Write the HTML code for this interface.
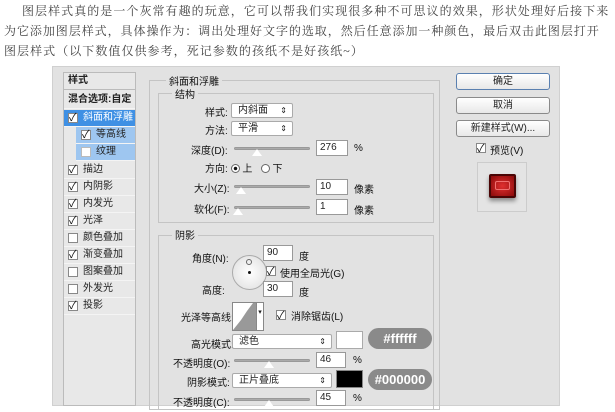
<!DOCTYPE html>
<html><head><meta charset="utf-8"><style>
*{margin:0;padding:0;box-sizing:border-box}
body{width:615px;height:412px;background:#fff;position:relative;overflow:hidden;font-family:"Liberation Sans","Noto Sans CJK SC",sans-serif;color:#222}
.a{position:absolute;white-space:nowrap}
.p{font-family:"Liberation Serif","Noto Serif CJK SC",serif;font-size:12px;color:#444;letter-spacing:1.05px}
.dlg{position:absolute;left:52px;top:66px;width:508px;height:340px;background:#e2e2e2;border:1px solid #d0d0d0}
.f{font-size:10px;color:#111}
.list{position:absolute;left:63px;top:72px;width:73px;height:334px;background:#e8e8e8;border:1px solid #bbb}
.it{position:absolute;left:0;width:71px;height:17px;border-bottom:1px solid #f4f4f4;font-size:10px;line-height:16px}
.cb{position:absolute;width:10px;height:10px;background:#fff;border:1px solid #888;top:3px}
.cb.c::after{content:"✓";position:absolute;left:0;top:-4px;font-size:11px;color:#111}
.box{position:absolute;border:1px solid #c4c4c4}
.sel{position:absolute;height:15px;background:#fff;border:1px solid #aaa;border-radius:2px;font-size:10px;line-height:13px;padding-left:6px}
.sel::after{content:"⇕";position:absolute;right:5px;top:0;font-size:8px}
.in{position:absolute;height:16px;background:#fff;border:1px solid #999;font-size:10px;line-height:14px;padding-left:3px}
.sl{position:absolute;height:3px;background:#aaa;border:1px solid #999;border-radius:2px}
.th{position:absolute;width:0;height:0;border-left:5px solid transparent;border-right:5px solid transparent;border-bottom:7px solid #fff;top:2px}
.btn{position:absolute;left:456px;width:94px;height:17px;background:linear-gradient(#fff,#e8e8e8);border:1px solid #8a8a8a;border-radius:3px;font-size:10px;text-align:center;line-height:15px}
.tag{position:absolute;left:368px;width:64px;height:21px;border-radius:11px;background:#8a8a8a;color:#fff;font-weight:bold;font-size:13px;text-align:center;line-height:21px}
</style></head><body>
<div class="a p" style="left:22px;top:2px">图层样式真的是一个灰常有趣的玩意，它可以帮我们实现很多种不可思议的效果，形状处理好后接下来</div>
<div class="a p" style="left:4px;top:22px;letter-spacing:0.95px">为它添加图层样式，具体操作为：调出处理好文字的选取，然后任意添加一种颜色，最后双击此图层打开</div>
<div class="a p" style="left:4px;top:42px">图层样式（以下数值仅供参考，死记参数的孩纸不是好孩纸~）</div>
<div class="dlg"></div>
<div class="list">
<div class="it" style="top:0;font-weight:bold;padding-left:4px;border-bottom:1px solid #bbb">样式</div>
<div class="it" style="top:19px;padding-left:4px;font-weight:bold">混合选项:自定</div>
<div class="it" style="top:37px;background:#3f90e4;color:#fff"><span class="cb c" style="left:4px"></span><span style="position:absolute;left:19px">斜面和浮雕</span></div>
<div class="it" style="top:54px;background:#9ec6f0;left:12px;width:59px"><span class="cb c" style="left:5px"></span><span style="position:absolute;left:20px">等高线</span></div>
<div class="it" style="top:71px;background:#9ec6f0;left:12px;width:59px"><span class="cb" style="left:5px;border-color:#bbb"></span><span style="position:absolute;left:20px">纹理</span></div>
<div class="it" style="top:89px"><span class="cb c" style="left:4px"></span><span style="position:absolute;left:19px">描边</span></div>
<div class="it" style="top:106px"><span class="cb c" style="left:4px"></span><span style="position:absolute;left:19px">内阴影</span></div>
<div class="it" style="top:123px"><span class="cb c" style="left:4px"></span><span style="position:absolute;left:19px">内发光</span></div>
<div class="it" style="top:140px"><span class="cb c" style="left:4px"></span><span style="position:absolute;left:19px">光泽</span></div>
<div class="it" style="top:157px"><span class="cb" style="left:4px"></span><span style="position:absolute;left:19px">颜色叠加</span></div>
<div class="it" style="top:174px"><span class="cb c" style="left:4px"></span><span style="position:absolute;left:19px">渐变叠加</span></div>
<div class="it" style="top:191px"><span class="cb" style="left:4px"></span><span style="position:absolute;left:19px">图案叠加</span></div>
<div class="it" style="top:208px"><span class="cb" style="left:4px"></span><span style="position:absolute;left:19px">外发光</span></div>
<div class="it" style="top:225px"><span class="cb c" style="left:4px"></span><span style="position:absolute;left:19px">投影</span></div>
</div>
<div class="box" style="left:149px;top:80px;width:291px;height:330px"></div>
<div class="a f" style="left:166px;top:73px;background:#e2e2e2;padding:0 3px">斜面和浮雕</div>
<div class="box" style="left:158px;top:93px;width:276px;height:130px"></div>
<div class="a f" style="left:172px;top:86px;background:#e2e2e2;padding:0 3px">结构</div>
<div class="a f" style="left:205px;top:104px">样式:</div><div class="sel" style="left:231px;top:103px;width:62px">内斜面</div>
<div class="a f" style="left:205px;top:122px">方法:</div><div class="sel" style="left:231px;top:121px;width:62px">平滑</div>
<div class="a f" style="left:191px;top:142px">深度(D):</div><div class="sl" style="left:234px;top:147px;width:76px"></div><div class="th" style="left:252px;top:149px"></div><div class="in" style="left:316px;top:140px;width:32px">276</div><div class="a f" style="left:354px;top:143px">%</div>
<div class="a f" style="left:205px;top:160px">方向: <span style="display:inline-block;width:9px;height:9px;border:1px solid #666;border-radius:50%;background:radial-gradient(#111 30%,#fff 40%);vertical-align:-1px"></span> 上 &nbsp;&nbsp;<span style="display:inline-block;width:9px;height:9px;border:1px solid #666;border-radius:50%;background:#fff;vertical-align:-1px"></span> 下</div>
<div class="a f" style="left:194px;top:180px">大小(Z):</div><div class="sl" style="left:234px;top:185px;width:76px"></div><div class="th" style="left:236px;top:187px"></div><div class="in" style="left:316px;top:179px;width:32px">10</div><div class="a f" style="left:354px;top:181px">像素</div>
<div class="a f" style="left:194px;top:201px">软化(F):</div><div class="sl" style="left:234px;top:206px;width:76px"></div><div class="th" style="left:233px;top:208px"></div><div class="in" style="left:316px;top:199px;width:32px">1</div><div class="a f" style="left:354px;top:202px">像素</div>
<div class="box" style="left:158px;top:235px;width:276px;height:175px"></div>
<div class="a f" style="left:172px;top:227px;background:#e2e2e2;padding:0 3px">阴影</div>
<div class="a f" style="left:192px;top:250px">角度(N):</div>
<div class="a" style="left:232px;top:255px;width:35px;height:35px;border-radius:50%;background:radial-gradient(#fff,#ddd);border:1px solid #aaa"><div style="position:absolute;left:15px;top:15px;width:3px;height:3px;background:#111;border-radius:50%"></div><div style="position:absolute;left:13px;top:3px;width:6px;height:6px;border:1px solid #666;border-radius:50%"></div></div>
<div class="in" style="left:263px;top:245px;width:30px">90</div><div class="a f" style="left:299px;top:248px">度</div>
<div class="cb c" style="left:266px;top:266px"></div><div class="a f" style="left:280px;top:265px">使用全局光(G)</div>
<div class="a f" style="left:202px;top:282px">高度:</div>
<div class="in" style="left:263px;top:281px;width:30px">30</div><div class="a f" style="left:299px;top:284px">度</div>
<div class="a f" style="left:181px;top:309px">光泽等高线:</div>
<div class="a" style="left:232px;top:302px;width:32px;height:29px;background:#fff;border:1px solid #888"><svg width="24" height="27" style="position:absolute;left:0;top:0"><path d="M0 27 L8 17 L14 8 L20 0 L24 0 L24 27 Z" fill="#999"/></svg><div style="position:absolute;right:0;top:0;width:7px;height:27px;border-left:1px solid #888;font-size:7px;text-align:center;line-height:20px">▾</div></div>
<div class="cb c" style="left:276px;top:310px"></div><div class="a f" style="left:291px;top:308px">消除锯齿(L)</div>
<div class="a f" style="left:191px;top:336px">高光模式:</div><div class="sel" style="left:232px;top:334px;width:100px">滤色</div>
<div class="a" style="left:336px;top:331px;width:27px;height:18px;background:#fff;border:1px solid #aaa"></div>
<div class="tag" style="top:328px">#ffffff</div>
<div class="a f" style="left:173px;top:355px">不透明度(O):</div><div class="sl" style="left:234px;top:359px;width:76px"></div><div class="th" style="left:264px;top:361px"></div><div class="in" style="left:316px;top:352px;width:30px">46</div><div class="a f" style="left:353px;top:355px">%</div>
<div class="a f" style="left:187px;top:374px">阴影模式:</div><div class="sel" style="left:232px;top:373px;width:100px">正片叠底</div>
<div class="a" style="left:336px;top:370px;width:27px;height:18px;background:#000;border:1px solid #888"></div>
<div class="tag" style="top:369px">#000000</div>
<div class="a f" style="left:173px;top:394px">不透明度(C):</div><div class="sl" style="left:234px;top:398px;width:76px"></div><div class="th" style="left:264px;top:400px"></div><div class="in" style="left:316px;top:390px;width:30px">45</div><div class="a f" style="left:353px;top:393px">%</div>
<div class="btn" style="top:73px;border-color:#5a80b0">确定</div>
<div class="btn" style="top:97px">取消</div>
<div class="btn" style="top:120px">新建样式(W)...</div>
<div class="cb c" style="left:476px;top:143px"></div><div class="a f" style="left:490px;top:142px">预览(V)</div>
<div class="a" style="left:477px;top:162px;width:50px;height:50px;border:1px solid #ccc;background:#e4e4e4"></div>
<div class="a" style="left:489px;top:174px;width:27px;height:24px;background:radial-gradient(#e03030,#8a0a0a);border:2px solid #4a0505;border-radius:2px;box-shadow:0 3px 4px rgba(0,0,0,.4)"><div style="position:absolute;left:4px;top:5px;width:15px;height:9px;border:1px solid #f07070;border-radius:2px"></div></div>
</body></html>
